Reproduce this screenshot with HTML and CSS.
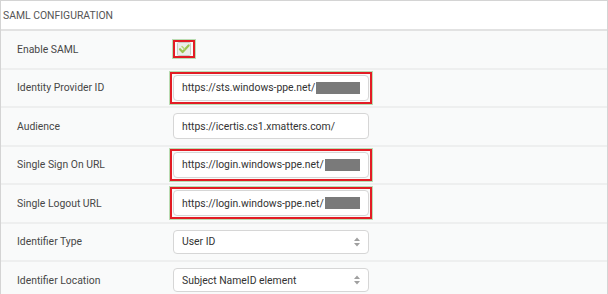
FILE: index.html
```html
<!DOCTYPE html>
<html lang="en">
<head>
  <meta charset="UTF-8">
  <title>SAML Configuration</title>
  <link rel="stylesheet" href="styles.css">
</head>
<body>
  <div class="panel">
    <div class="panel-title">SAML CONFIGURATION</div>

    <div class="row">
      <div class="label">Enable SAML</div>
      <div class="control">
        <span class="mark mark-check">
          <svg class="checkbox" width="14" height="14" viewBox="0 0 14 14">
            <rect x="0.5" y="0.5" width="13" height="13" rx="1" fill="#eceeea" stroke="#c9ccc6"/>
            <path d="M3 7.2 L5.6 10 L11.6 3.4" fill="none" stroke="#9cc450" stroke-width="2.2" stroke-linecap="round" stroke-linejoin="round"/>
            <path d="M5 4.5 L7.5 7" fill="none" stroke="#b5d576" stroke-width="1.4" stroke-linecap="round"/>
          </svg>
        </span>
      </div>
    </div>

    <div class="row">
      <div class="label">Identity Provider ID</div>
      <div class="control">
        <span class="mark">
          <span class="field">https://sts.windows-ppe.net/<span class="redact"></span></span>
        </span>
      </div>
    </div>

    <div class="row">
      <div class="label">Audience</div>
      <div class="control">
        <span class="field">https://icertis.cs1.xmatters.com/</span>
      </div>
    </div>

    <div class="row">
      <div class="label">Single Sign On URL</div>
      <div class="control">
        <span class="mark">
          <span class="field">https://login.windows-ppe.net/<span class="redact"></span></span>
        </span>
      </div>
    </div>

    <div class="row">
      <div class="label">Single Logout URL</div>
      <div class="control">
        <span class="mark">
          <span class="field">https://login.windows-ppe.net/<span class="redact"></span></span>
        </span>
      </div>
    </div>

    <div class="row">
      <div class="label">Identifier Type</div>
      <div class="control">
        <span class="field select">User ID
          <svg class="arrows" width="8" height="12" viewBox="0 0 8 12"><path d="M4 1.5 L7 5 H1 Z M4 10.5 L1 7 H7 Z" fill="#a0a0a0"/></svg>
        </span>
      </div>
    </div>

    <div class="row">
      <div class="label">Identifier Location</div>
      <div class="control">
        <span class="field select">Subject NameID element
          <svg class="arrows" width="8" height="12" viewBox="0 0 8 12"><path d="M4 1.5 L7 5 H1 Z M4 10.5 L1 7 H7 Z" fill="#a0a0a0"/></svg>
        </span>
      </div>
    </div>
  </div>
</body>
</html>
```

FILE: styles.css
```css
body {
  margin: 0;
  padding: 0;
  background-color: #fff;
  font-family: Roboto, "Liberation Sans", Arial, sans-serif;
  font-size: 10.4px;
  color: #444;
}
.panel {
  width: 606px;
  height: 294px;
  border: 1px solid #d4d4d4;
  border-bottom: none;
  overflow: hidden;
}
.panel-title {
  height: 28px;
  line-height: 29px;
  padding-left: 2px;
  color: #555;
  border-bottom: 2px solid #e2e2e2;
  background-color: #fff;
}
.row {
  display: grid;
  grid-template-columns: 156px 1fr;
  align-items: center;
  height: 36.5px;
  padding-left: 16px;
  background-color: #f9fafa;
  border-bottom: 2px solid #eeefef;
}
.label {
  color: #474747;
}
.control {
  display: flex;
  align-items: center;
}
.mark {
  display: inline-flex;
  border: 2px solid #e21c24;
  padding: 1px;
  margin-left: -3px;
  box-shadow: 0 0 0 1px #b9dcb3;
}
.mark-check {
  padding: 0 2px;
  margin-left: 0;
}
.checkbox {
  display: block;
}
.field {
  box-sizing: border-box;
  display: flex;
  align-items: center;
  width: 196px;
  height: 26px;
  padding: 0 8px;
  background-color: #fff;
  border: 1px solid #d6d6d6;
  border-radius: 4px;
  color: #333;
  white-space: nowrap;
}
.redact {
  flex: 1;
  height: 12px;
  margin-left: 1px;
  background-color: #7a7a7a;
}
.select {
  height: 24px;
  justify-content: space-between;
}
.arrows {
  display: block;
  margin-right: -1px;
}
```
